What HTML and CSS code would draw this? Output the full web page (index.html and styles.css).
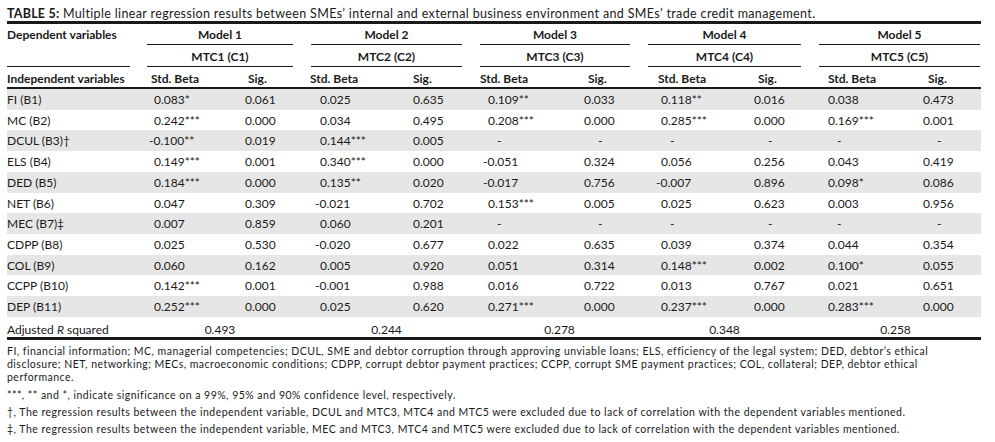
FILE: index.html
```html
<!DOCTYPE html>
<html lang="en">
<head>
<meta charset="utf-8">
<title>Table 5: Multiple linear regression results</title>
<link rel="stylesheet" href="styles.css">
</head>
<body>
<div class="page">
  <p class="caption"><b>TABLE 5:</b> Multiple linear regression results between SMEs’ internal and external business environment and SMEs’ trade credit management.</p>
  <table class="reg">
    <colgroup>
      <col class="c0">
      <col class="cb1"><col class="cs1">
      <col class="cb2"><col class="cs2">
      <col class="cb3"><col class="cs3">
      <col class="cb4"><col class="cs4">
      <col class="cb5"><col class="cs5">
    </colgroup>
    <thead>
      <tr class="h1">
        <th rowspan="2" class="dep">Dependent variables</th>
        <th colspan="2" class="grp">Model 1</th>
        <th colspan="2" class="grp">Model 2</th>
        <th colspan="2" class="grp">Model 3</th>
        <th colspan="2" class="grp">Model 4</th>
        <th colspan="2" class="grp last">Model 5</th>
      </tr>
      <tr class="h2">
        <th colspan="2" class="grp">MTC1 (C1)</th>
        <th colspan="2" class="grp">MTC2 (C2)</th>
        <th colspan="2" class="grp">MTC3 (C3)</th>
        <th colspan="2" class="grp">MTC4 (C4)</th>
        <th colspan="2" class="grp last">MTC5 (C5)</th>
      </tr>
      <tr class="h3">
        <th>Independent variables</th>
        <th>Std. Beta</th><th>Sig.</th>
        <th>Std. Beta</th><th>Sig.</th>
        <th>Std. Beta</th><th>Sig.</th>
        <th>Std. Beta</th><th>Sig.</th>
        <th>Std. Beta</th><th>Sig.</th>
      </tr>
    </thead>
    <tbody>
      <tr><td>FI (B1)</td><td>0.083*</td><td>0.061</td><td>0.025</td><td>0.635</td><td>0.109**</td><td>0.033</td><td>0.118**</td><td>0.016</td><td>0.038</td><td>0.473</td></tr>
      <tr><td>MC (B2)</td><td>0.242***</td><td>0.000</td><td>0.034</td><td>0.495</td><td>0.208***</td><td>0.000</td><td>0.285***</td><td>0.000</td><td>0.169***</td><td>0.001</td></tr>
      <tr><td>DCUL (B3)†</td><td class="neg">-0.100**</td><td>0.019</td><td>0.144***</td><td>0.005</td><td class="dash">-</td><td class="dash">-</td><td class="dash">-</td><td class="dash">-</td><td class="dash">-</td><td class="dash">-</td></tr>
      <tr><td>ELS (B4)</td><td>0.149***</td><td>0.001</td><td>0.340***</td><td>0.000</td><td class="neg">-0.051</td><td>0.324</td><td>0.056</td><td>0.256</td><td>0.043</td><td>0.419</td></tr>
      <tr><td>DED (B5)</td><td>0.184***</td><td>0.000</td><td>0.135**</td><td>0.020</td><td class="neg">-0.017</td><td>0.756</td><td class="neg">-0.007</td><td>0.896</td><td>0.098*</td><td>0.086</td></tr>
      <tr><td>NET (B6)</td><td>0.047</td><td>0.309</td><td class="neg">-0.021</td><td>0.702</td><td>0.153***</td><td>0.005</td><td>0.025</td><td>0.623</td><td>0.003</td><td>0.956</td></tr>
      <tr><td>MEC (B7)‡</td><td>0.007</td><td>0.859</td><td>0.060</td><td>0.201</td><td class="dash">-</td><td class="dash">-</td><td class="dash">-</td><td class="dash">-</td><td class="dash">-</td><td class="dash">-</td></tr>
      <tr><td>CDPP (B8)</td><td>0.025</td><td>0.530</td><td class="neg">-0.020</td><td>0.677</td><td>0.022</td><td>0.635</td><td>0.039</td><td>0.374</td><td>0.044</td><td>0.354</td></tr>
      <tr><td>COL (B9)</td><td>0.060</td><td>0.162</td><td>0.005</td><td>0.920</td><td>0.051</td><td>0.314</td><td>0.148***</td><td>0.002</td><td>0.100*</td><td>0.055</td></tr>
      <tr><td>CCPP (B10)</td><td>0.142***</td><td>0.001</td><td class="neg">-0.001</td><td>0.988</td><td>0.016</td><td>0.722</td><td>0.013</td><td>0.767</td><td>0.021</td><td>0.651</td></tr>
      <tr><td>DEP (B11)</td><td>0.252***</td><td>0.000</td><td>0.025</td><td>0.620</td><td>0.271***</td><td>0.000</td><td>0.237***</td><td>0.000</td><td>0.283***</td><td>0.000</td></tr>
      <tr class="adj"><td>Adjusted <i>R</i> squared</td><td colspan="2">0.493</td><td colspan="2">0.244</td><td colspan="2" class="a3">0.278</td><td colspan="2">0.348</td><td colspan="2">0.258</td></tr>
    </tbody>
  </table>
  <div class="notes">
    <p class="first">FI, financial information; MC, managerial competencies; DCUL, SME and debtor corruption through approving unviable loans; ELS, efficiency of the legal system; DED, debtor’s ethical<br>disclosure; NET, networking; MECs, macroeconomic conditions; CDPP, corrupt debtor payment practices; CCPP, corrupt SME payment practices; COL, collateral; DEP, debtor ethical<br>performance.</p>
    <p>***, ** and *, indicate significance on a 99%, 95% and 90% confidence level, respectively.</p>
    <p>†, The regression results between the independent variable, DCUL and MTC3, MTC4 and MTC5 were excluded due to lack of correlation with the dependent variables mentioned.</p>
    <p>‡, The regression results between the independent variable, MEC and MTC3, MTC4 and MTC5 were excluded due to lack of correlation with the dependent variables mentioned.</p>
  </div>
</div>
</body>
</html>
```
FILE: styles.css
```css
html, body {
  margin: 0;
  padding: 0;
  background: #ffffff;
}

body {
  font-family: Lato, "Liberation Sans", sans-serif;
  color: #1a1a1a;
}

.page {
  width: 974px;
  padding-left: 7px;
}

.caption {
  margin: 0;
  padding-top: 6px;
  font-size: 12.5px;
  letter-spacing: 0.36px;
  line-height: 15px;
  white-space: nowrap;
}

.caption b {
  font-weight: 700;
  letter-spacing: 0.2px;
}

.reg {
  width: 974px;
  table-layout: fixed;
  border-collapse: separate;
  border-spacing: 0;
  font-size: 12px;
}

.reg col.c0 { width: 131px; }
.reg col.cb1 { width: 92px; }
.reg col.cs1 { width: 72px; }
.reg col.cb2 { width: 93px; }
.reg col.cs2 { width: 76px; }
.reg col.cb3 { width: 94px; }
.reg col.cs3 { width: 74px; }
.reg col.cb4 { width: 96px; }
.reg col.cs4 { width: 75px; }
.reg col.cb5 { width: 95px; }
.reg col.cs5 { width: 76px; }

.reg th,
.reg td {
  padding: 0;
  text-align: left;
  white-space: nowrap;
  vertical-align: top;
}

.reg th {
  font-weight: 700;
}

/* header row 1: Model N */
.reg .h1 th {
  border-top: 3px solid #1a1a1a;
  padding-top: 1px;
  padding-bottom: 1px;
  line-height: 19px;
}

.reg .grp {
  text-align: center;
  padding-left: 9px;
  padding-right: 9px;
  background-image: linear-gradient(#1a1a1a, #1a1a1a);
  background-repeat: no-repeat;
  background-size: calc(100% - 18px) 1px;
  background-position: 9px 100%;
}

.reg .grp.last {
  padding-right: 1px;
  background-size: calc(100% - 10px) 1px;
}

.reg .dep {
  background-image: linear-gradient(#1a1a1a, #1a1a1a);
  background-repeat: no-repeat;
  background-size: calc(100% - 8px) 1px;
  background-position: 0 100%;
}

/* header row 2: MTCn */
.reg .h2 th {
  padding-top: 3px;
  padding-bottom: 1px;
  line-height: 18px;
}

/* header row 3: column labels */
.reg .h3 th {
  padding-top: 3px;
  line-height: 17px;
  border-bottom: 2px solid #1a1a1a;
}

.reg .h3 th:nth-child(2) { padding-left: 13px; }
.reg .h3 th:nth-child(3) { padding-left: 18px; }
.reg .h3 th:nth-child(4) { padding-left: 8px; }
.reg .h3 th:nth-child(5) { padding-left: 18px; }
.reg .h3 th:nth-child(6) { padding-left: 9px; }
.reg .h3 th:nth-child(7) { padding-left: 23px; }
.reg .h3 th:nth-child(8) { padding-left: 19px; }
.reg .h3 th:nth-child(9) { padding-left: 23px; }
.reg .h3 th:nth-child(10) { padding-left: 18px; }
.reg .h3 th:nth-child(11) { padding-left: 23px; }

/* body rows */
.reg tbody td {
  padding-top: 1px;
  line-height: 19.7px;
}

.reg tbody tr:nth-child(odd) {
  background: #e6e6e6;
}

.reg tbody td:nth-child(2) { padding-left: 16px; }
.reg tbody td:nth-child(3) { padding-left: 15px; }
.reg tbody td:nth-child(4) { padding-left: 18px; }
.reg tbody td:nth-child(5) { padding-left: 18px; }
.reg tbody td:nth-child(6) { padding-left: 17px; }
.reg tbody td:nth-child(7) { padding-left: 19px; }
.reg tbody td:nth-child(8) { padding-left: 22px; }
.reg tbody td:nth-child(9) { padding-left: 19px; }
.reg tbody td:nth-child(10) { padding-left: 18px; }
.reg tbody td:nth-child(11) { padding-left: 18px; }

.reg td.neg {
  text-indent: -5px;
}

.reg td.dash:nth-child(even) {
  text-indent: 9px;
}

.reg td.dash:nth-child(odd) {
  text-indent: 14px;
}

/* adjusted R squared row */
.reg tbody tr.adj {
  background: #ffffff;
}

.reg tr.adj td {
  padding-top: 6px;
  line-height: 14px;
  border-bottom: 3px solid #1a1a1a;
  text-align: center;
}

.reg tr.adj td:first-child {
  text-align: left;
  padding-left: 0;
}

.reg tr.adj td:nth-child(n+2) {
  padding-left: 0;
}

.reg tr.adj td.a3 {
  padding-left: 9px;
}

/* footnotes */
.notes {
  margin-top: 5px;
  font-size: 10.5px;
  letter-spacing: 0.48px;
  line-height: 13px;
  white-space: nowrap;
}

.notes p {
  margin: 0 0 4px 0;
}

.notes p.first {
  margin-bottom: 5px;
}
```
